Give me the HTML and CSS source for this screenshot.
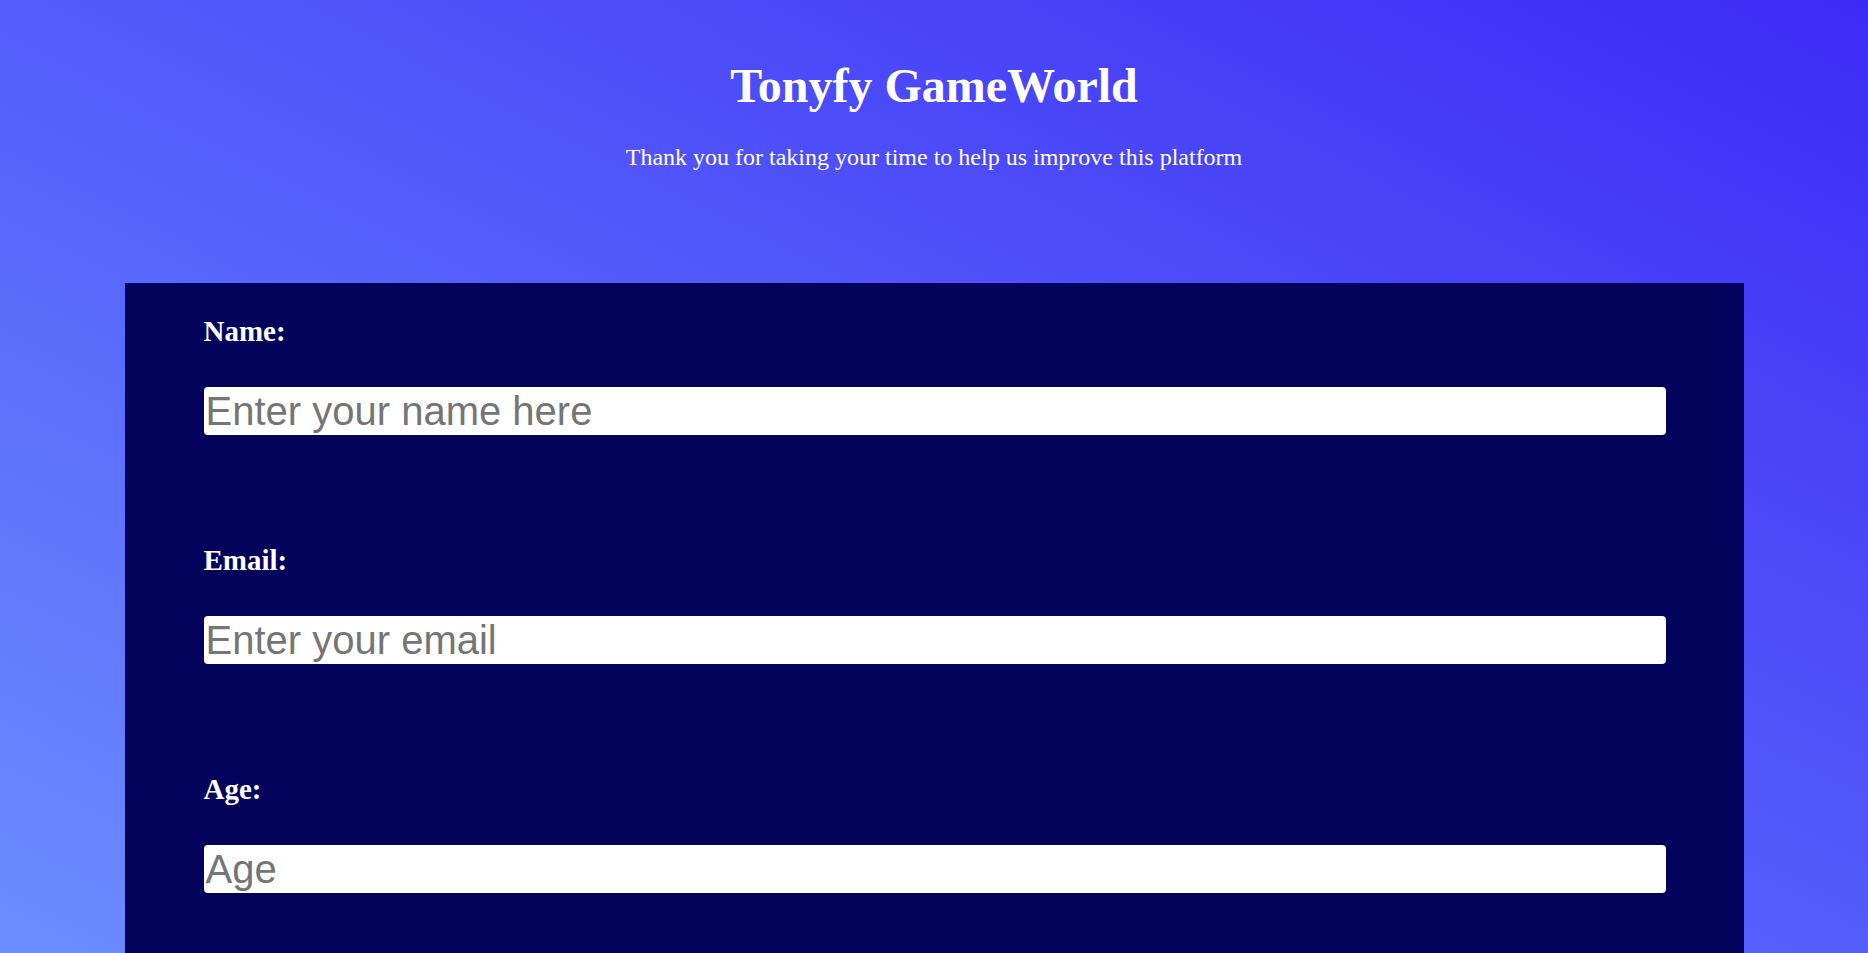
FILE: index.html
```html
<!DOCTYPE html>
<html lang="en">
<head>
<meta charset="utf-8">
<title>Tonyfy GameWorld Survey</title>
<link rel="stylesheet" href="styles.css">
</head>
<body>
  <header class="intro">
    <h1 class="title">Tonyfy GameWorld</h1>
    <p class="subtitle">Thank you for taking your time to help us improve this platform</p>
  </header>
  <main class="survey">
    <form class="survey-form">
      <div class="field">
        <label class="field-label" for="name">Name:</label>
        <input class="field-input" id="name" type="text" placeholder="Enter your name here">
      </div>
      <div class="field">
        <label class="field-label" for="email">Email:</label>
        <input class="field-input" id="email" type="email" placeholder="Enter your email">
      </div>
      <div class="field">
        <label class="field-label" for="age">Age:</label>
        <input class="field-input" id="age" type="number" placeholder="Age">
      </div>
    </form>
  </main>
</body>
</html>
```
FILE: styles.css
```css
html {
  min-height: 100%;
  background: linear-gradient(to top right, #6b8eff 0%, #3d2bf5 100%);
  background-attachment: fixed;
}
body {
  margin: 0;
  font-family: "Liberation Serif", "Times New Roman", serif;
  color: #ffffff;
}
.intro {
  text-align: center;
  padding-top: 58px;
}
.title {
  margin: 0;
  font-size: 48px;
  font-weight: bold;
  line-height: 55px;
}
.subtitle {
  margin: 30px 0 0;
  font-size: 24px;
  line-height: 28px;
}
.survey {
  width: 1619px;
  margin: 112px auto 0;
  background: #03035b;
}
.survey-form {
  display: flex;
  flex-direction: column;
  padding: 32px 78px 60px 79px;
}
.field {
  display: flex;
  flex-direction: column;
  margin-bottom: 109px;
}
.field-label {
  font-size: 29px;
  font-weight: bold;
  line-height: 33px;
  margin-bottom: 39px;
}
.field-input {
  font-family: "Liberation Sans", Arial, sans-serif;
  font-size: 40px;
  height: 48px;
  box-sizing: border-box;
  padding: 1px 2px;
  border: none;
  border-radius: 4px;
  background: #ffffff;
  color: #000;
  outline: none;
}
.field-input::placeholder {
  color: #757575;
}
.field-input::-webkit-outer-spin-button,
.field-input::-webkit-inner-spin-button {
  -webkit-appearance: none;
  margin: 0;
}
```
